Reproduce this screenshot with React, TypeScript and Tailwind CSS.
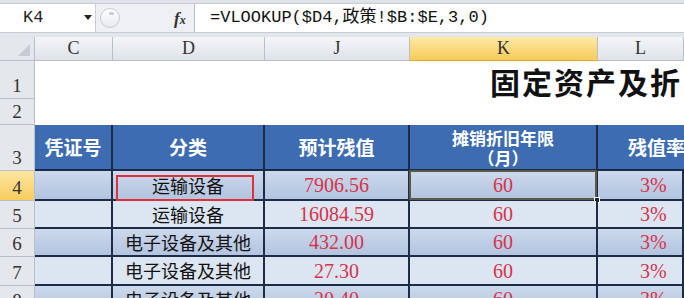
import React from 'react';

const COLS = [35, 78, 152, 145, 188];
const SERIF = "font-['Liberation_Serif','Noto_Sans_CJK_SC',serif]";
const CJK = "font-['Noto_Sans_CJK_SC','Noto_Sans',sans-serif]";

interface DataRow {
  n: string;
  cls: string;
  val: string;
  months: string;
  rate: string;
}

const rows: DataRow[] = [
  { n: '4', cls: '运输设备', val: '7906.56', months: '60', rate: '3%' },
  { n: '5', cls: '运输设备', val: '16084.59', months: '60', rate: '3%' },
  { n: '6', cls: '电子设备及其他', val: '432.00', months: '60', rate: '3%' },
  { n: '7', cls: '电子设备及其他', val: '27.30', months: '60', rate: '3%' },
  { n: '8', cls: '电子设备及其他', val: '20.40', months: '60', rate: '3%' },
];

const heights = [30, 28, 28, 29, 28];

const RowHead: React.FC<{ label: string; active?: boolean; h: number }> = ({ label, active, h }) => (
  <div
    style={{ height: h }}
    className={`w-[35px] shrink-0 flex items-end justify-center pb-[1px] border-r border-b border-[#b9bfc9] text-[19px] leading-[22px] text-[#333] ${SERIF} ${
      active ? 'bg-gradient-to-b from-[#fde6a0] to-[#f7cd5a]' : 'bg-[#e4e7ec]'
    }`}
  >
    {label}
  </div>
);

export default function App() {
  return (
    <div className="w-[684px] h-[298px] overflow-hidden bg-[#e1e5eb] select-none">
      {/* ribbon edge */}
      <div className="h-[4px] bg-[#dfe3e9] border-b border-[#c6ccd5]" />

      {/* formula bar */}
      <div className="h-[29px] flex bg-[#eef0f4] border-b border-[#c6ccd5]">
        <div className="w-[96px] bg-white flex items-center border-r border-[#c9ced6] relative">
          <span className="ml-[23px] text-[17px] text-[#222] font-['Liberation_Mono',monospace]">K4</span>
          <svg className="absolute left-[84px] top-[11px]" width="8" height="6" viewBox="0 0 8 6">
            <path d="M0 0 H8 L4 5 Z" fill="#222" />
          </svg>
        </div>
        <div className="w-[98px] flex items-center relative">
          <div className="absolute left-[4px] top-[4px] w-[20px] h-[20px] rounded-full border border-[#c5cad2] bg-gradient-to-b from-white to-[#e6e9ee]" />
          <div className="absolute left-[13px] top-[8px] w-[5px] h-[3px] rounded-full bg-[#c9cdd4]" />
          <span className="absolute left-[78px] top-[2px] text-[17px] italic font-bold text-[#333] font-['Liberation_Serif',serif]">
            f<span className="text-[12px]">x</span>
          </span>
        </div>
        <div className="flex-1 bg-white border-l border-[#b9bfc9] flex items-center pl-[15px]">
          <span className="text-[17px] text-[#111] whitespace-nowrap font-['Liberation_Mono','Noto_Sans_CJK_SC',monospace]">
            =VLOOKUP($D4,政策!$B:$E,3,0)
          </span>
        </div>
      </div>

      <div className="h-[4px] bg-[#e3e6eb]" />

      {/* column headers */}
      <div className="flex h-[24px]">
        <div className="w-[35px] shrink-0 bg-[#e4e7ec] border-r border-b border-[#b9bfc9] relative">
          <svg className="absolute right-[4px] bottom-[4px]" width="12" height="12" viewBox="0 0 12 12">
            <path d="M12 0 V12 H0 Z" fill="#c6cbd3" />
          </svg>
        </div>
        {['C', 'D', 'J', 'K', 'L'].map((c, i) => (
          <div
            key={c}
            style={{ width: i < 4 ? COLS[i + 1] : undefined }}
            className={`${i === 4 ? 'flex-1' : 'shrink-0'} flex items-center justify-center border-r border-b border-[#b9bfc9] text-[18px] text-[#333] ${SERIF} ${
              c === 'K'
                ? 'bg-gradient-to-b from-[#fde9a6] to-[#f7cb55] border-b-[#e0a93a]'
                : 'bg-gradient-to-b from-[#f3f5f8] to-[#dfe3e9]'
            }`}
          >
            {c}
          </div>
        ))}
      </div>

      {/* row 1: title */}
      <div className="flex h-[38px]">
        <RowHead label="1" h={38} />
        <div className="flex-1 bg-white overflow-hidden flex items-end pl-[455px]">
          <span className={`text-[30px] leading-[36px] font-bold text-[#111] tracking-[2px] whitespace-nowrap ${CJK}`}>
            固定资产及折旧表
          </span>
        </div>
      </div>

      {/* row 2 */}
      <div className="flex h-[26px]">
        <RowHead label="2" h={26} />
        <div className="flex-1 bg-white" />
      </div>

      {/* row 3: table headers */}
      <div className="flex h-[46px]">
        <RowHead label="3" h={46} />
        {[
          ['凭证号'],
          ['分类'],
          ['预计残值'],
          ['摊销折旧年限', '（月）'],
          ['残值率'],
        ].map((lines, i) => (
          <div
            key={i}
            style={{ width: i < 4 ? COLS[i + 1] : undefined }}
            className={`${i === 4 ? 'flex-1 pl-[30px]' : 'shrink-0 items-center'} flex flex-col justify-center bg-[#3d6cb0] border-r-2 border-b-2 border-[#1b2a47] text-white font-bold ${
              lines.length > 1 ? 'text-[17px] leading-[20px] pt-[2px]' : 'text-[19px] leading-[22px]'
            } ${CJK}`}
          >
            {lines.map((l) => (
              <span key={l} className="whitespace-nowrap text-center">
                {l}
              </span>
            ))}
          </div>
        ))}
      </div>

      {/* data rows */}
      {rows.map((r, idx) => {
        const dark = idx % 2 === 0;
        const bg = dark ? 'bg-gradient-to-b from-[#cdd9ec] to-[#b2c4df]' : 'bg-[#dce6f2]';
        const h = heights[idx];
        const cell = `shrink-0 flex items-center justify-center border-r-2 border-b-2 border-[#1f2c47] ${bg}`;
        const num = `text-[20px] text-[#d6334a] ${SERIF}`;
        return (
          <div key={r.n} className="flex" style={{ height: h }}>
            <RowHead label={r.n} active={idx === 0} h={h} />
            <div style={{ width: COLS[1] }} className={cell} />
            <div style={{ width: COLS[2] }} className={`${cell} relative`}>
              <span className={`text-[18px] text-[#111] ${CJK}`}>{r.cls}</span>
              {idx === 0 && (
                <div className="absolute left-[3px] right-[9px] top-[4px] bottom-[-2px] border-2 border-[#e0303a]" />
              )}
            </div>
            <div style={{ width: COLS[3] }} className={cell}>
              <span className={num}>{r.val}</span>
            </div>
            <div style={{ width: COLS[4] }} className={`${cell} relative`}>
              <span className={num}>{r.months}</span>
              {idx === 0 && (
                <>
                  <div className="absolute inset-[-1px] border-2 border-[#5b5a48]" />
                  <div className="absolute right-[-4px] bottom-[-4px] w-[6px] h-[6px] bg-[#222] border border-white" />
                </>
              )}
            </div>
            <div className={`${cell} flex-1 justify-start pl-[42px] border-r-0`}>
              <span className={num}>{r.rate}</span>
            </div>
          </div>
        );
      })}
    </div>
  );
}
